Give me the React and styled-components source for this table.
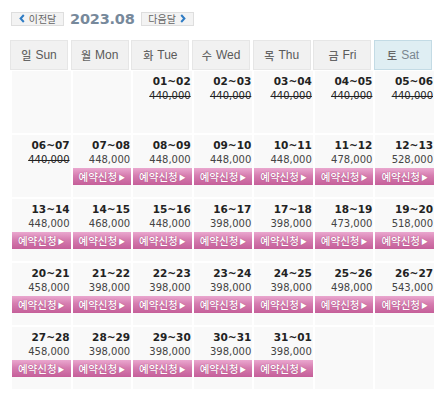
import React from 'react'
import styled, { createGlobalStyle } from 'styled-components'

const GlobalStyle = createGlobalStyle`
    body {
        margin: 0;
        background: #ffffff;
        font-family: "DejaVu Sans", "Noto Sans CJK KR", sans-serif;
    }
`

const days = [
    { ko: '일', en: 'Sun' },
    { ko: '월', en: 'Mon' },
    { ko: '화', en: 'Tue' },
    { ko: '수', en: 'Wed' },
    { ko: '목', en: 'Thu' },
    { ko: '금', en: 'Fri' },
    { ko: '토', en: 'Sat', sat: true }
]

// [date, price, open]  null = empty cell
const weeks = [
    [null, null, ['01~02', '440,000'], ['02~03', '440,000'], ['03~04', '440,000'], ['04~05', '440,000'], ['05~06', '440,000']],
    [['06~07', '440,000'], ['07~08', '448,000', 1], ['08~09', '448,000', 1], ['09~10', '448,000', 1], ['10~11', '448,000', 1], ['11~12', '478,000', 1], ['12~13', '528,000', 1]],
    [['13~14', '448,000', 1], ['14~15', '468,000', 1], ['15~16', '448,000', 1], ['16~17', '398,000', 1], ['17~18', '398,000', 1], ['18~19', '473,000', 1], ['19~20', '518,000', 1]],
    [['20~21', '458,000', 1], ['21~22', '398,000', 1], ['22~23', '398,000', 1], ['23~24', '398,000', 1], ['24~25', '398,000', 1], ['25~26', '498,000', 1], ['26~27', '543,000', 1]],
    [['27~28', '458,000', 1], ['28~29', '398,000', 1], ['29~30', '398,000', 1], ['30~31', '398,000', 1], ['31~01', '398,000', 1], null, null]
]

const Chevron = ({ dir }) => (
    <ChevronSvg width="6" height="9" viewBox="0 0 6 9">
        <path
            d={dir === 'left' ? 'M4.8 1 L1.6 4.5 L4.8 8' : 'M1.2 1 L4.4 4.5 L1.2 8'}
            fill="none"
            stroke="#2f7cc4"
            strokeWidth="2"
        />
    </ChevronSvg>
)

export default function App() {
    return (
        <Page>
            <GlobalStyle />
            <Nav>
                <NavButton>
                    <Chevron dir="left" />이전달
                </NavButton>
                <Month>2023.08</Month>
                <NavButton>
                    다음달<Chevron dir="right" />
                </NavButton>
            </Nav>
            <HeadGrid>
                {days.map(d => (
                    <DayHead key={d.en} sat={d.sat ? 1 : 0}>
                        <DayKo>{d.ko}</DayKo> {d.en}
                    </DayHead>
                ))}
            </HeadGrid>
            <BodyGrid>
                {weeks.flat().map((c, i) => (
                    <Cell key={i}>
                        {c && (
                            <>
                                <DateText>{c[0]}</DateText>
                                <Price closed={c[2] ? 0 : 1}>{c[1]}</Price>
                                {c[2] && <BookButton>예약신청<Arrow>▶</Arrow></BookButton>}
                            </>
                        )}
                    </Cell>
                ))}
            </BodyGrid>
        </Page>
    )
}

const Page = styled.div`
    width: 441px;
    padding: 11px 0 0 10px;
    box-sizing: border-box;
`

const Nav = styled.div`
    display: flex;
    align-items: center;
    gap: 6px;
    height: 15px;
    margin-left: 1px;
`

const NavButton = styled.div`
    display: flex;
    align-items: center;
    justify-content: center;
    gap: 4px;
    width: 53px;
    height: 14px;
    box-sizing: border-box;
    background: #f3f3f3;
    border: 1px solid #dedede;
    font-family: "Noto Sans CJK KR", sans-serif;
    font-size: 10px;
    color: #666;
    line-height: 12px;
`

const ChevronSvg = styled.svg`
    display: block;
    flex-shrink: 0;
`

const Month = styled.div`
    font-family: "DejaVu Sans", sans-serif;
    font-weight: bold;
    font-size: 14.5px;
    color: #77899b;
    letter-spacing: -0.2px;
`

const HeadGrid = styled.div`
    display: grid;
    grid-template-columns: repeat(7, 58px);
    column-gap: 2.7px;
    margin-top: 14px;
    width: 424px;
`

const DayHead = styled.div`
    height: 30px;
    box-sizing: border-box;
    display: flex;
    align-items: center;
    justify-content: center;
    gap: 4px;
    background: ${p => (p.sat ? '#dfeef3' : '#f1f1f1')};
    border: 1px solid ${p => (p.sat ? '#c3dbe5' : '#e6e6e6')};
    font-family: "Liberation Sans", sans-serif;
    font-size: 12px;
    color: ${p => (p.sat ? '#7a8690' : '#5a5a5a')};
`

const DayKo = styled.span`
    font-family: "Noto Sans CJK KR", sans-serif;
    font-weight: 500;
    font-size: 11px;
    color: #666;
`

const BodyGrid = styled.div`
    display: grid;
    grid-template-columns: repeat(7, 1fr);
    grid-auto-rows: 62px;
    column-gap: 2px;
    row-gap: 2px;
    margin-top: 1px;
    margin-left: 2px;
    width: 422px;
`

const Cell = styled.div`
    background: #f9f9f9;
    display: flex;
    flex-direction: column;
    align-items: stretch;
    padding-top: 4px;
    text-align: right;
`

const DateText = styled.div`
    font-family: "DejaVu Sans", sans-serif;
    font-weight: bold;
    font-size: 10.5px;
    line-height: 13px;
    color: #222;
    padding-right: 1px;
`

const Price = styled.div`
    font-family: "DejaVu Sans", sans-serif;
    font-size: 10px;
    line-height: 16px;
    color: ${p => (p.closed ? '#222' : '#444')};
    text-decoration: ${p => (p.closed ? 'line-through' : 'none')};
    padding-right: 1px;
`

const BookButton = styled.div`
    height: 17px;
    display: flex;
    align-items: center;
    justify-content: center;
    gap: 1px;
    background: linear-gradient(to bottom, #eaa7cf 0%, #d67db0 45%, #c55f99 100%);
    color: #fff;
    font-family: "Noto Sans CJK KR", sans-serif;
    font-weight: 500;
    font-size: 10.5px;
    text-shadow: 0 0 1px #9c3f74;
`

const Arrow = styled.span`
    font-size: 7px;
    margin-top: 1px;
`
